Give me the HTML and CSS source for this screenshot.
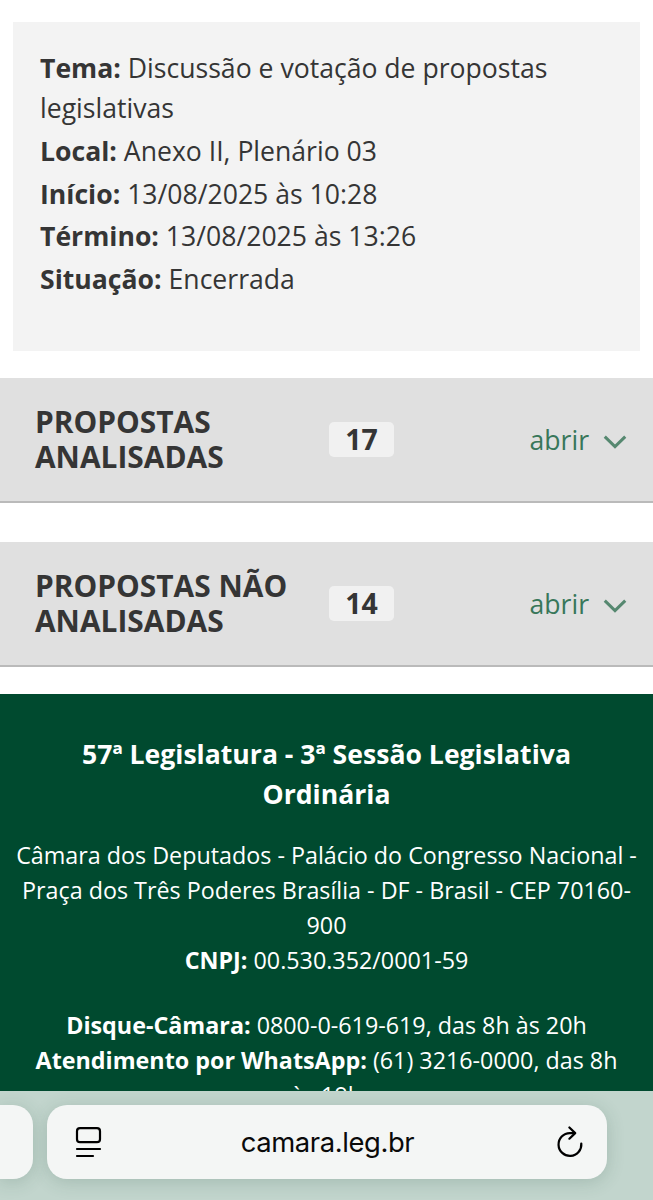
FILE: index.html
```html
<!DOCTYPE html>
<html lang="pt-BR">

<head>
    <meta charset="UTF-8">
    <meta name="viewport" content="width=device-width, initial-scale=1.0">
    <title>Câmara dos Deputados</title>
    <link rel="stylesheet" href="styles.css">
</head>

<body>
    <main class="page">
        <ul class="info">
            <li><strong>Tema:</strong> Discussão e votação de propostas legislativas</li>
            <li><strong>Local:</strong> Anexo II, Plenário 03</li>
            <li><strong>Início:</strong> 13/08/2025 às 10:28</li>
            <li><strong>Término:</strong> 13/08/2025 às 13:26</li>
            <li><strong>Situação:</strong> Encerrada</li>
        </ul>

        <section class="accordion">
            <h2 class="accordion-title">Propostas analisadas</h2>
            <span class="count">17</span>
            <a href="#" class="toggle">abrir
                <svg class="chevron" viewBox="0 0 22 13"><path d="M1.5 1.5 L11 10.8 L20.5 1.5" /></svg>
            </a>
        </section>

        <section class="accordion">
            <h2 class="accordion-title">Propostas não analisadas</h2>
            <span class="count">14</span>
            <a href="#" class="toggle">abrir
                <svg class="chevron" viewBox="0 0 22 13"><path d="M1.5 1.5 L11 10.8 L20.5 1.5" /></svg>
            </a>
        </section>

        <footer class="footer">
            <h3 class="footer-title">57ª Legislatura - 3ª Sessão Legislativa Ordinária</h3>
            <p>Câmara dos Deputados - Palácio do Congresso Nacional - Praça dos Três Poderes Brasília - DF - Brasil - CEP 70160-<br>900<br><strong>CNPJ:</strong> 00.530.352/0001-59</p>
            <p><strong>Disque-Câmara:</strong> 0800-0-619-619, das 8h às 20h<br><strong>Atendimento por WhatsApp:</strong> (61) 3216-0000, das 8h<br>às 19h</p>
        </footer>
    </main>

    <nav class="browser-bar">
        <div class="tab tab-prev"></div>
        <div class="tab tab-current">
            <svg class="icon-reader" viewBox="0 0 28 32">
                <rect x="2" y="2.2" width="23" height="14" rx="3" />
                <path d="M2 23 H25 M2 30 H18" />
            </svg>
            <span class="address">camara.leg.br</span>
            <svg class="icon-reload" viewBox="0 0 28 32">
                <path d="M25.3 17.5 A11.4 11.4 0 1 1 13.9 7.1 H18.2" />
                <path d="M13.4 1.5 L19.2 7.1 L13.4 12.7" />
            </svg>
        </div>
        <div class="tab tab-next"></div>
    </nav>
</body>

</html>
```

FILE: styles.css
```css
* {
    box-sizing: border-box;
}

body {
    font-family: 'Open Sans', sans-serif;
    background-color: #fff;
    color: #353535;
    margin: 0;
    display: flex;
    flex-direction: column;
    height: 1200px;
    overflow: hidden;
}

.page {
    height: 1091px;
    flex: none;
    overflow: hidden;
    padding-top: 22px;
}

.info {
    list-style: none;
    height: 329px;
    margin: 0 13px 27px;
    padding: 27.4px 27px 0;
    background-color: #f3f3f3;
    font-size: 26.6px;
    line-height: 39.9px;
}

.info li {
    margin-bottom: 2.8px;
}

.accordion {
    display: flex;
    align-items: center;
    height: 125px;
    margin-bottom: 39px;
    padding: 0 26px 0 35px;
    background-color: #e0e0e0;
    border-bottom: 2px solid #bababa;
}

.accordion + .accordion {
    margin-bottom: 27px;
}

.accordion-title {
    width: 294px;
    margin: 0;
    padding-bottom: 2px;
    font-size: 29.9px;
    line-height: 35px;
    text-transform: uppercase;
}

.count {
    width: 65px;
    height: 35px;
    border-radius: 5px;
    background-color: #f1f1f1;
    font-size: 28.5px;
    font-weight: 700;
    line-height: 35px;
    text-align: center;
}

.toggle {
    display: flex;
    align-items: center;
    gap: 14px;
    margin-left: auto;
    padding-top: 1px;
    color: #38775a;
    font-size: 26.6px;
    text-decoration: none;
}

.chevron {
    width: 24px;
    height: 14px;
    margin-top: 3px;
    fill: none;
    stroke: #568870;
    stroke-width: 2.8;
}

.footer {
    height: 500px;
    padding: 40px 13px 0;
    background-color: #004a2f;
    color: #fff;
    font-size: 23.3px;
    line-height: 35px;
    text-align: center;
}

.footer-title {
    margin: 0 0 24px;
    padding: 0 27px;
    font-size: 26.6px;
    line-height: 40px;
}

.footer p {
    margin: 0 0 30px;
}

.browser-bar {
    display: flex;
    justify-content: space-between;
    height: 109px;
    padding-top: 14px;
    overflow: hidden;
    background-color: #c2d5cd;
}

.tab {
    height: 74px;
    border-radius: 20px;
    background-color: #f4f6f5;
    box-shadow: 0 3px 18px rgba(40, 80, 65, 0.2);
}

.tab-prev {
    width: 33px;
    border-radius: 0 20px 20px 0;
}

.tab-current {
    display: flex;
    align-items: center;
    justify-content: space-between;
    width: 560px;
    padding: 0 23px 0 28px;
}

.tab-next {
    width: 33px;
    visibility: hidden;
}

.address {
    margin-right: 3px;
    font-family: 'Inter', sans-serif;
    font-size: 27.4px;
    letter-spacing: -0.4px;
    color: #0a0a0a;
}

.icon-reader,
.icon-reload {
    width: 28px;
    height: 32px;
    fill: none;
    stroke: #000;
    stroke-width: 2.2;
    stroke-linecap: round;
    stroke-linejoin: round;
}
```
